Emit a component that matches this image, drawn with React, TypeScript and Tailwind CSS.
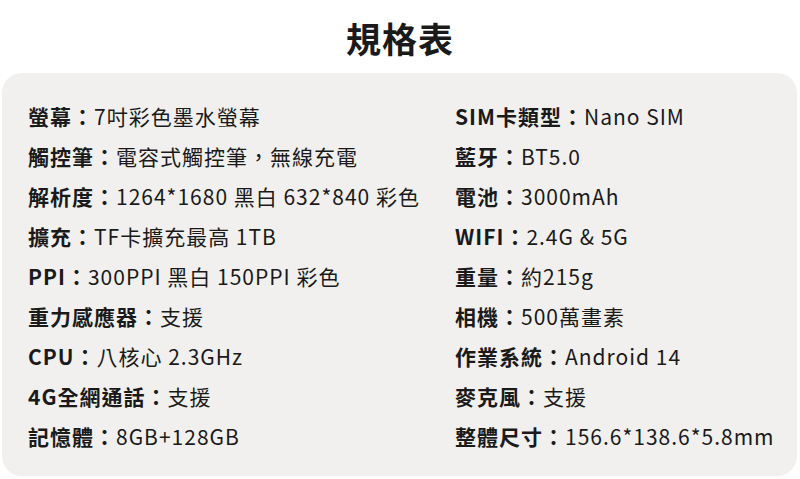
const left: [string, string][] = [
  ["螢幕", "7吋彩色墨水螢幕"],
  ["觸控筆", "電容式觸控筆，無線充電"],
  ["解析度", "1264*1680 黑白 632*840 彩色"],
  ["擴充", "TF卡擴充最高 1TB"],
  ["PPI", "300PPI 黑白 150PPI 彩色"],
  ["重力感應器", "支援"],
  ["CPU", "八核心 2.3GHz"],
  ["4G全網通話", "支援"],
  ["記憶體", "8GB+128GB"],
];

const right: [string, string][] = [
  ["SIM卡類型", "Nano SIM"],
  ["藍牙", "BT5.0"],
  ["電池", "3000mAh"],
  ["WIFI", "2.4G & 5G"],
  ["重量", "約215g"],
  ["相機", "500萬畫素"],
  ["作業系統", "Android 14"],
  ["麥克風", "支援"],
  ["整體尺寸", "156.6*138.6*5.8mm"],
];

function Row({ label, value }: { label: string; value: string }) {
  return (
    <div className="h-[40px] leading-[40px] whitespace-nowrap text-[21px] tracking-[1px]">
      <span className="font-bold">{label}：</span>
      <span className="font-normal">{value}</span>
    </div>
  );
}

export default function App() {
  return (
    <div
      className="w-[800px] h-[479px] bg-white text-[#1a1a1a] overflow-hidden"
      style={{ fontFamily: '"Noto Sans CJK TC", "Noto Sans", sans-serif' }}
    >
      {/* Title */}
      <h1 className="pt-[13px] h-[63px] leading-[50px] text-center text-[35px] font-bold tracking-[1px]">
        規格表
      </h1>
      <div className="mt-[10px] ml-[2px] w-[795px] h-[403px] rounded-[20px] bg-[#f1f0ee] pl-[26px] pt-[23px] grid grid-cols-[427px_1fr]">
        <div>
          {left.map(([l, v]) => <Row key={l} label={l} value={v} />)}
        </div>
        <div>
          {right.map(([l, v]) => <Row key={l} label={l} value={v} />)}
        </div>
      </div>
    </div>
  );
}
